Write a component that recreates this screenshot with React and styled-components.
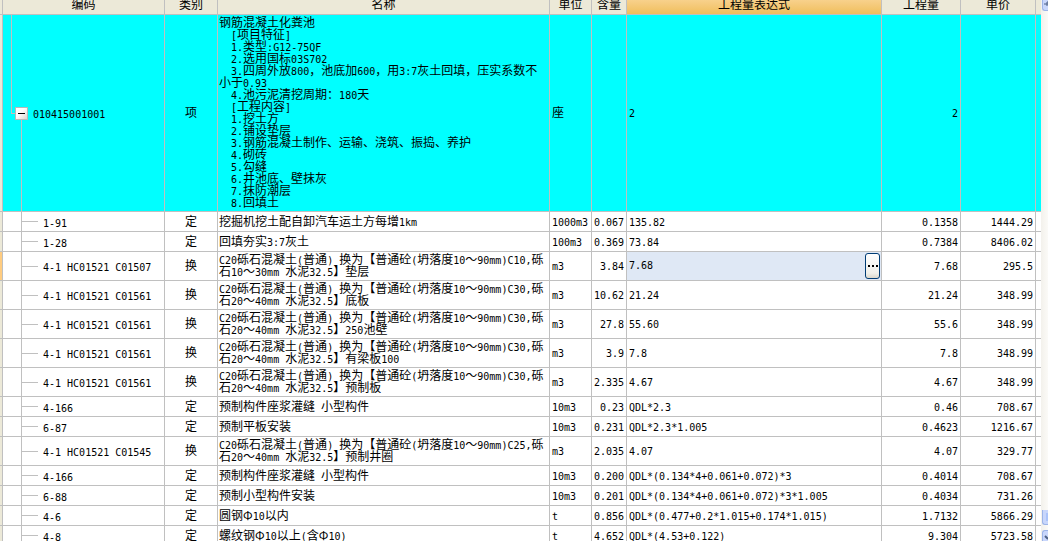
import React from 'react'
import styled, { createGlobalStyle, css } from 'styled-components'

const LINE = '#c0c0c0'

const GlobalStyle = createGlobalStyle`
	* {
		box-sizing: border-box;
	}
	body {
		margin: 0;
		background: #fff;
		color: #000;
		font-family: 'Noto Sans CJK SC', sans-serif;
		font-size: 12px;
		line-height: 12px;
	}
`
const Page = styled.div`
	display: flex;
	height: 100vh;
	overflow: hidden;
`
const Sheet = styled.div`
	flex: 1;
	min-width: 0;
	overflow: hidden;
`
const Table = styled.table`
	width: 100%;
	margin-top: -6px;
	table-layout: fixed;
	border-collapse: separate;
	border-spacing: 0;
`
const Col = styled.col`
	width: ${(p) => p.$width};
`
const HeadCell = styled.th`
	height: 21px;
	padding: 0 0 1px;
	border-right: 1px solid ${LINE};
	border-bottom: 1px solid ${LINE};
	background: ${(p) =>
		p.$active ? 'linear-gradient(#fbd9a0, #f0be5c)' : '#ece9d8'};
	font-weight: 400;
	white-space: nowrap;
`
const Cell = styled.td`
	height: ${(p) => (p.$tall ? 29 : 20)}px;
	padding: 0 2px 2px;
	border-right: 1px solid ${LINE};
	border-bottom: 1px solid ${LINE};
	background-color: ${(p) => (p.$group ? '#00ffff' : '#fff')};
	text-align: ${(p) => p.$align || 'left'};
	vertical-align: middle;
	white-space: nowrap;
`
const NameCell = styled(Cell)`
	padding: ${(p) => (p.$group ? '1px 1px 3px' : '0 1px 2px')};
	white-space: pre-wrap;
	text-spacing-trim: space-all;
`
const GutterCell = styled(Cell)`
	padding: 0;
	background-color: ${(p) => (p.$current ? '#ffcc80' : '#ece9d8')};
`
const EndCell = styled(Cell)`
	padding: 0;
	border-right: 0;
`
const EndHead = styled(HeadCell)`
	border-right: 0;
`
const stroke = `linear-gradient(${LINE}, ${LINE})`
// tree guides: the group row joins the outer branch and opens the inner one
const CodeCell = styled(Cell)`
	padding: 0;
	background-repeat: no-repeat;
	${(p) =>
		p.$group
			? css`
					background-image: ${stroke}, ${stroke}, ${stroke};
					background-position: 8px 0, 8px 50%, 18px 100%;
					background-size: 1px 50%, 4px 1px, 1px 50%;
			  `
			: css`
					background-image: ${stroke}, ${stroke};
					background-position: 18px 0, 19px 50%;
					background-size: 1px 100%, 16px 1px;
			  `}
`
const CodeBody = styled.div`
	display: flex;
	align-items: center;
	gap: 5px;
	padding-left: ${(p) => (p.$group ? 12 : 40)}px;
`
const Toggle = styled.button`
	display: flex;
	align-items: center;
	justify-content: center;
	width: 13px;
	height: 13px;
	padding: 0;
	border: 1px solid #b8b8b8;
	background: linear-gradient(135deg, #fff 40%, #d8d4cc);
`
const Editing = styled(Cell)`
	padding: 0 1px 0 2px;
	background-color: #dfe8f5;
`
const Editor = styled.div`
	display: flex;
	align-items: center;
	height: 26px;
`
const Field = styled.input`
	flex: 1;
	min-width: 0;
	padding: 0;
	border: 0;
	outline: 0;
	background: transparent;
	font-family: 'DejaVu Sans Mono', monospace;
	font-size: 10px;
	line-height: 12px;
`
const MoreButton = styled.button`
	display: flex;
	align-items: center;
	justify-content: center;
	width: 15px;
	height: 26px;
	padding: 0;
	border: 1px solid #003c74;
	border-radius: 3px;
	background: linear-gradient(#fff, #f0f0ea 80%, #dcd8cc);
`
const Latin = styled.span`
	font-family: 'DejaVu Sans Mono', monospace;
	font-size: 10px;
	line-height: 0;
`
const Scrollbar = styled.div`
	display: flex;
	flex-direction: column;
	justify-content: space-between;
	width: 7px;
	background: linear-gradient(90deg, #f3f1ec, #fbfaf7);
`
const ScrollPart = styled.button`
	display: block;
	width: 6px;
	height: ${(p) => p.$height}px;
	margin: 0 0 0 1px;
	padding: 0;
	overflow: hidden;
	border: 1px solid #9cb4e8;
	border-width: ${(p) => (p.$end ? '1px 0 0 1px' : '0 0 1px 1px')};
	border-radius: ${(p) => (p.$end ? '3px 0 0 0' : '0 0 0 3px')};
	background: #c8d6fb;
`
const ScrollEnd = styled.div`
	display: flex;
	flex-direction: column;
	gap: 5px;
`

// half-width characters and full-width characters are set in separate fonts
const Mixed = ({ text }) =>
	text
		.split(/([\x20-\x7e]+)/)
		.filter(Boolean)
		.map((part, i) =>
			/^[\x20-\x7e]/.test(part) ? <Latin key={i}>{part}</Latin> : part
		)

const columns = [
	['编码', '162px'],
	['类别', '53px'],
	['名称', '332px'],
	['单位', '42px'],
	['含量', '35px'],
	['工程量表达式', 'auto'],
	['工程量', '79px'],
	['单价', '75px'],
]

const groupName = [
	'钢筋混凝土化粪池',
	'  [项目特征]',
	'  1.类型:G12-75QF',
	'  2.选用国标03S702',
	'  3.四周外放800，池底加600，用3:7灰土回填，压实系数不小于0.93',
	'  4.池污泥清挖周期：180天',
	'  [工程内容]',
	'  1.挖土方',
	'  2.铺设垫层',
	'  3.钢筋混凝土制作、运输、浇筑、振捣、养护',
	'  4.砌砖',
	'  5.勾缝',
	'  6.井池底、壁抹灰',
	'  7.抹防潮层',
	'  8.回填土',
].join('\n')

const concrete = (grade, size, part) =>
	`C20砾石混凝土(普通) 换为【普通砼(坍落度10～90mm)${grade},砾石${size}mm 水泥32.5】${part}`

const rows = [
	['010415001001', '项', groupName, '座', '', '2', '2', ''],
	['1-91', '定', '挖掘机挖土配自卸汽车运土方每增1km', '1000m3', '0.067', '135.82', '0.1358', '1444.29'],
	['1-28', '定', '回填夯实3:7灰土', '100m3', '0.369', '73.84', '0.7384', '8406.02'],
	['4-1 HC01521 C01507', '换', concrete('C10', '10～30', '垫层'), 'm3', '3.84', '7.68', '7.68', '295.5'],
	['4-1 HC01521 C01561', '换', concrete('C30', '20～40', '底板'), 'm3', '10.62', '21.24', '21.24', '348.99'],
	['4-1 HC01521 C01561', '换', concrete('C30', '20～40', '250池壁'), 'm3', '27.8', '55.60', '55.6', '348.99'],
	['4-1 HC01521 C01561', '换', concrete('C30', '20～40', '有梁板100'), 'm3', '3.9', '7.8', '7.8', '348.99'],
	['4-1 HC01521 C01561', '换', concrete('C30', '20～40', '预制板'), 'm3', '2.335', '4.67', '4.67', '348.99'],
	['4-166', '定', '预制构件座浆灌缝 小型构件', '10m3', '0.23', 'QDL*2.3', '0.46', '708.67'],
	['6-87', '定', '预制平板安装', '10m3', '0.231', 'QDL*2.3*1.005', '0.4623', '1216.67'],
	['4-1 HC01521 C01545', '换', concrete('C25', '20～40', '预制井圈'), 'm3', '2.035', '4.07', '4.07', '329.77'],
	['4-166', '定', '预制构件座浆灌缝 小型构件', '10m3', '0.200', 'QDL*(0.134*4+0.061+0.072)*3', '0.4014', '708.67'],
	['6-88', '定', '预制小型构件安装', '10m3', '0.201', 'QDL*(0.134*4+0.061+0.072)*3*1.005', '0.4034', '731.26'],
	['4-6', '定', '圆钢Φ10以内', 't', '0.856', 'QDL*(0.477+0.2*1.015+0.174*1.015)', '1.7132', '5866.29'],
	['4-8', '定', '螺纹钢Φ10以上(含Φ10)', 't', '4.652', 'QDL*(4.53+0.122)', '9.304', '5723.58'],
]

const CURRENT = 3

const Row = ({ data, group, current }) => {
	const [code, kind, name, unit, content, formula, amount, price] = data
	const look = { $group: group, $tall: kind === '换' }
	return (
		<tr>
			<GutterCell {...look} $current={current} />
			<CodeCell {...look}>
				<CodeBody $group={group}>
					{group && (
						<Toggle type='button' aria-label='折叠'>
							<svg width='7' height='1'>
								<rect width='7' height='1' />
							</svg>
						</Toggle>
					)}
					<div>
						<Mixed text={code} />
					</div>
				</CodeBody>
			</CodeCell>
			<Cell {...look} $align='center'>
				{kind}
			</Cell>
			<NameCell {...look}>
				<Mixed text={name} />
			</NameCell>
			<Cell {...look}>
				<Mixed text={unit} />
			</Cell>
			<Cell {...look} $align='right'>
				<Mixed text={content} />
			</Cell>
			{current ? (
				<Editing $tall>
					<Editor>
						<Field aria-label='工程量表达式' defaultValue={formula} />
						<MoreButton type='button' aria-label='更多'>
							<svg width='10' height='2'>
								<path d='M0 0h2v2H0zM4 0h2v2H4zM8 0h2v2H8z' />
							</svg>
						</MoreButton>
					</Editor>
				</Editing>
			) : (
				<Cell {...look}>
					<Mixed text={formula} />
				</Cell>
			)}
			<Cell {...look} $align='right'>
				<Mixed text={amount} />
			</Cell>
			<Cell {...look} $align='right'>
				<Mixed text={price} />
			</Cell>
			<EndCell {...look} />
		</tr>
	)
}

const App = () => (
	<Page>
		<GlobalStyle />
		<Sheet>
			<Table>
				<colgroup>
					<Col $width='3px' />
					{columns.map(([title, width]) => (
						<Col key={title} $width={width} />
					))}
					<Col $width='5px' />
				</colgroup>
				<thead>
					<tr>
						<HeadCell />
						{columns.map(([title]) => (
							<HeadCell key={title} $active={title === '工程量表达式'}>
								{title}
							</HeadCell>
						))}
						<EndHead />
					</tr>
				</thead>
				<tbody>
					{rows.map((data, i) => (
						<Row key={i} data={data} group={i === 0} current={i === CURRENT} />
					))}
				</tbody>
			</Table>
		</Sheet>
		<Scrollbar>
			<ScrollPart type='button' aria-label='向上' $height={11}>
				<svg width='5' height='10' viewBox='0 0 5 10' display='block'>
					<path d='M1 4h4M3 3h2M4 2h1M3 5h2' stroke='#4d6185' />
				</svg>
			</ScrollPart>
			<ScrollEnd>
				<ScrollPart type='button' aria-label='滑块' $height={15}>
					<svg width='5' height='14' viewBox='0 0 5 14' display='block'>
						<path d='M3 4h2M3 6h2M3 8h2M3 10h2' stroke='#8cb0f8' />
					</svg>
				</ScrollPart>
				<ScrollPart type='button' aria-label='向下' $height={11} $end>
					<svg width='5' height='10' viewBox='0 0 5 10' display='block'>
						<path d='M2 5l3 3' stroke='#4d6185' strokeWidth='2' />
					</svg>
				</ScrollPart>
			</ScrollEnd>
		</Scrollbar>
	</Page>
)

export default App
